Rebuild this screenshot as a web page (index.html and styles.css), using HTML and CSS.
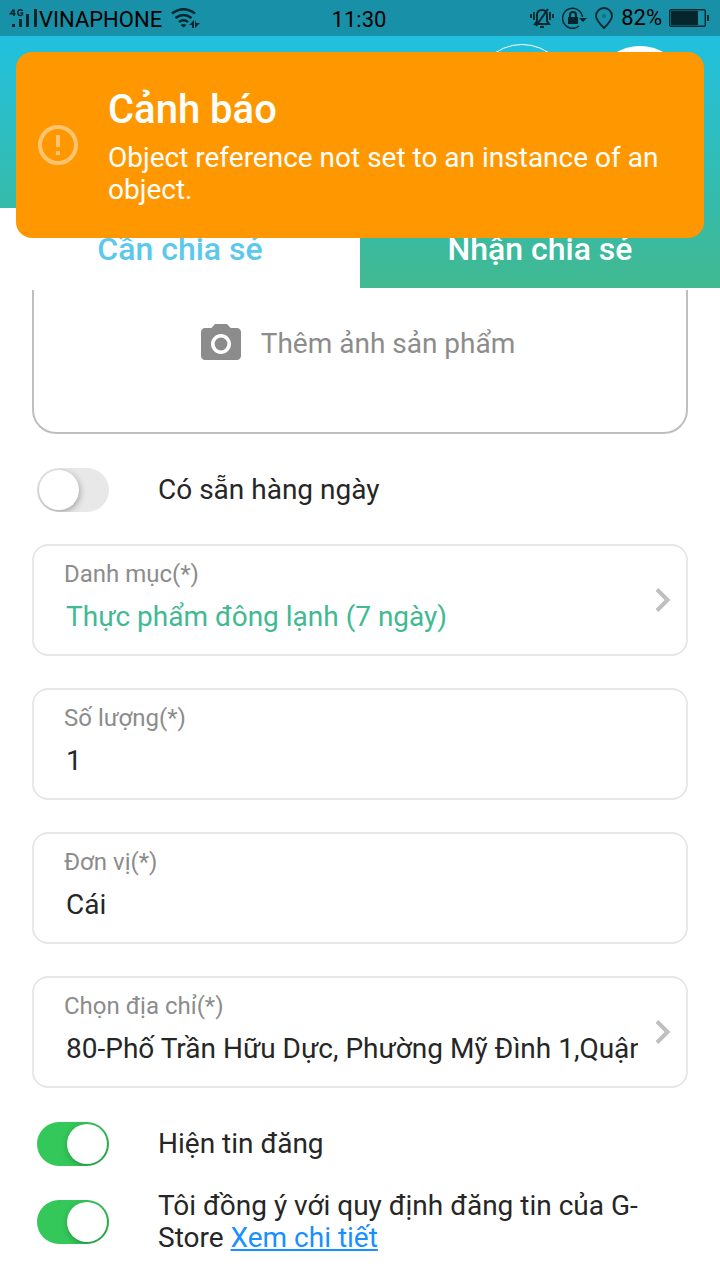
FILE: index.html
```html
<!DOCTYPE html>
<html lang="vi">
<head>
<meta charset="utf-8">
<meta name="viewport" content="width=device-width, initial-scale=1">
<title>G-Store</title>
<link rel="stylesheet" href="styles.css">
</head>
<body>
<header class="header">
  <div class="status">
    <div class="status-left">
      <svg class="signal" width="28" height="20" viewBox="0 0 28 20" fill="currentColor" aria-hidden="true">
        <path d="M3 16h3v3H3zM10 11h3v8h-3zM17 6h3v13h-3zM25 1h3v18h-3z"/>
        <path d="M4.500 1.500L1.500 5.800h5M5 1.500v6.500M13.500 3Q13 1.800 11.300 1.800Q8.800 1.800 8.800 4.700Q8.800 7.500 11.300 7.500Q13 7.500 13.500 6.500V5h-2" fill="none" stroke="currentColor" stroke-width="1.500"/>
      </svg>
      <span class="carrier">VINAPHONE</span>
      <svg class="wifi" width="28" height="20" viewBox="0 0 28 20" fill="none" stroke="currentColor" stroke-width="2.600" aria-hidden="true">
        <path d="M1 5.500Q12.500-3 24 5.500M4.500 10Q12.500 4 20.500 10M8 14Q12.500 10.500 17 14"/>
        <path d="M9.500 17Q12.500 14.800 15.500 17L12.500 19.500z" fill="currentColor" stroke="none"/>
        <path d="M23 12v8h-2v-3h-3zM24 20v-8l1 3h4z" fill="currentColor" stroke="none"/>
      </svg>
    </div>
    <span class="clock">11:30</span>
    <div class="status-right">
      <svg width="24" height="20" viewBox="0 0 24 20" fill="none" stroke="currentColor" stroke-width="2" aria-hidden="true">
        <path d="M1 6v4M4 4v8M20 4v8M23 6v4" stroke-width="1.800"/>
        <path d="M5 16h14l-2-3V7Q17 2 12 2Q7 2 7 7v6zM6 18L18 1M10 19h4"/>
      </svg>
      <svg width="25" height="22" viewBox="0 0 25 22" fill="none" stroke="currentColor" stroke-width="1.500" aria-hidden="true">
        <path d="M20.500 10A10 10 0 1 0 17 19"/>
        <path d="M6 10h10v7H6z" fill="currentColor" stroke="none"/>
        <path d="M8 10V8a3 3 0 0 1 6 0v2" stroke-width="2"/>
        <path d="M17 11h8l-4 4z" fill="currentColor" stroke="none"/>
      </svg>
      <svg width="18" height="22" viewBox="0 0 18 22" fill="none" stroke="currentColor" stroke-width="1.800" aria-hidden="true">
        <path d="M9 21Q1 13 1 9a8 8 0 0 1 16 0Q17 13 9 21z"/>
        <circle cx="9" cy="9" r="2" fill="#107085" stroke="none"/>
      </svg>
      <span class="percent">82%</span>
      <svg width="40" height="18" viewBox="0 0 40 18" fill="currentColor" aria-hidden="true">
        <rect x=".7" y=".7" width="35.600" height="16.600" rx="1.500" fill="none" stroke="currentColor" stroke-width="1.400"/>
        <path d="M2 2h27v14H2zM38 6h2v6h-2z"/>
      </svg>
    </div>
  </div>
  <div class="actions">
    <button class="action action-outline" type="button" aria-label="Menu"></button>
    <button class="action action-solid" type="button" aria-label="Avatar"></button>
  </div>
  <nav class="tabs">
    <button class="tab tab-active" type="button">Cần chia sẻ</button>
    <button class="tab" type="button">Nhận chia sẻ</button>
  </nav>
</header>

<section class="toast" role="alert">
  <svg class="toast-icon" width="40" height="40" viewBox="0 0 40 40" aria-hidden="true">
    <circle cx="20" cy="20" r="18" fill="none" stroke="#ffc470" stroke-width="4"/>
    <path d="M18 10h4v12h-4zM18 26h4v4h-4z" fill="#ffc470"/>
  </svg>
  <div class="toast-text">
    <h2 class="toast-title">Cảnh báo</h2>
    <p class="toast-message">Object reference not set to an instance of an object.</p>
  </div>
</section>

<main class="form">
  <button class="photo" type="button">
    <svg width="40" height="36" viewBox="2 2 20 18" fill="#8c8c8c" aria-hidden="true">
      <circle cx="12" cy="12" r="3.200"/>
      <path d="M9 2L7.170 4H4c-1.100 0-2 .9-2 2v12c0 1.100.9 2 2 2h16c1.100 0 2-.9 2-2V6c0-1.100-.9-2-2-2h-3.170L15 2H9zm3 15c-2.760 0-5-2.240-5-5s2.240-5 5-5 5 2.240 5 5-2.240 5-5 5z"/>
    </svg>
    <span class="photo-text">Thêm ảnh sản phẩm</span>
  </button>

  <div class="option option-daily">
    <input class="switch" type="checkbox" id="daily">
    <label for="daily">Có sẵn hàng ngày</label>
  </div>

  <div class="fields">
    <div class="field">
      <div class="field-body">
        <label class="field-label" for="category">Danh mục(*)</label>
        <input class="field-value field-green" id="category" type="text" readonly value="Thực phẩm đông lạnh (7 ngày)">
      </div>
      <svg class="chevron" width="16" height="26" viewBox="0 0 16 26" fill="none" stroke="#bfbfbf" stroke-width="4" aria-hidden="true"><path d="M2 2.500L12.500 13L2 23.500"/></svg>
    </div>
    <div class="field">
      <div class="field-body">
        <label class="field-label" for="quantity">Số lượng(*)</label>
        <input class="field-value" id="quantity" type="text" value="1">
      </div>
    </div>
    <div class="field">
      <div class="field-body">
        <label class="field-label" for="unit">Đơn vị(*)</label>
        <input class="field-value" id="unit" type="text" value="Cái">
      </div>
    </div>
    <div class="field">
      <div class="field-body">
        <label class="field-label" for="address">Chọn địa chỉ(*)</label>
        <input class="field-value" id="address" type="text" readonly value="80-Phố Trần Hữu Dực, Phường Mỹ Đình 1,Quận">
      </div>
      <svg class="chevron" width="16" height="26" viewBox="0 0 16 26" fill="none" stroke="#bfbfbf" stroke-width="4" aria-hidden="true"><path d="M2 2.500L12.500 13L2 23.500"/></svg>
    </div>
  </div>

  <div class="options">
    <div class="option">
      <input class="switch" type="checkbox" id="visible" checked>
      <label for="visible">Hiện tin đăng</label>
    </div>
    <div class="option">
      <input class="switch" type="checkbox" id="agree" checked>
      <label for="agree">Tôi đồng ý với quy định đăng tin của G-Store <a class="link" href="#">Xem chi tiết</a></label>
    </div>
  </div>
</main>
</body>
</html>
```
FILE: styles.css
```css
* {
  box-sizing: border-box;
}

body {
  margin: 0;
  background: #fff;
  color: #262626;
  font-family: Roboto, "Noto Sans", sans-serif;
  font-size: 28px;
  line-height: 32px;
}

button,
input {
  margin: 0;
  padding: 0;
  border: 0;
  background: none;
  color: inherit;
  font: inherit;
}

.header {
  background: linear-gradient(#21c0df, #21c0df 36px, #41b990);
}

/* Status bar */
.status {
  display: grid;
  grid-template-columns: 1fr auto 1fr;
  align-items: center;
  height: 36px;
  padding: 0 11px 0 9px;
  background: rgba(0, 0, 0, 0.25);
  color: #06262e;
  font-size: 22px;
}

.status-left,
.status-right {
  display: flex;
  align-items: center;
}

.status-left {
  gap: 2px;
}

.status-right {
  justify-content: flex-end;
  gap: 8px;
}

.carrier,
.clock,
.percent {
  color: #000;
}

.carrier,
.clock {
  padding-top: 3px;
}

.percent {
  margin-right: -1px;
}

.wifi {
  margin-left: 7px;
  overflow: visible;
}

/* Header actions */
.actions {
  display: flex;
  justify-content: flex-end;
  gap: 22px;
  height: 98px;
  margin: 8px 32px 66px;
}

.action {
  width: 96px;
  height: 96px;
  border-radius: 50%;
}

.action-outline {
  border: 1px solid #fff;
}

.action-solid {
  align-self: flex-end;
  background: #fff;
}

/* Tabs */
.tabs {
  display: flex;
}

.tab {
  flex: 1;
  height: 80px;
  padding-top: 2px;
  color: #fff;
  font-size: 32px;
  font-weight: 500;
}

.tab-active {
  background: #fff;
  color: #5bc8ec;
}

/* Warning toast floating over the header */
.toast {
  position: absolute;
  top: 52px;
  left: 16px;
  right: 16px;
  display: flex;
  align-items: center;
  gap: 30px;
  padding: 32px 22px;
  border-radius: 16px;
  background: #ff9800;
  color: #fff;
}

.toast-icon {
  flex: none;
}

.toast-text {
  padding-top: 2px;
}

.toast-title {
  margin: 0 0 8px;
  font-size: 40px;
  font-weight: 500;
  line-height: 48px;
}

.toast-message {
  margin: 0;
}

/* Form */
.form {
  padding: 2px 32px 25px;
}

.photo {
  display: flex;
  align-items: flex-start;
  justify-content: center;
  gap: 20px;
  width: 100%;
  padding: 34px 4px 72px 0;
  border: 2px solid #bfbfbf;
  border-top: 0;
  border-radius: 0 0 24px 24px;
  color: #8c8c8c;
}

.photo-text {
  padding-top: 4px;
}

.fields {
  display: grid;
  gap: 32px;
}

.field {
  display: flex;
  align-items: center;
  gap: 17px;
  padding: 14px 15px 21px 30px;
  border: 2px solid #e8e8e8;
  border-radius: 16px;
}

.field-body {
  display: flex;
  flex: 1;
  flex-direction: column;
  gap: 13px;
  min-width: 0;
}

.field-label {
  color: #8c8c8c;
  font-size: 24px;
  line-height: 28px;
}

.field-value {
  height: 32px;
  margin-left: 2px;
  outline: 0;
}

.field-green {
  color: #41b993;
}

.chevron {
  flex: none;
  margin-top: 7px;
}

/* Switch rows */
.options {
  display: grid;
  gap: 14px;
  padding-top: 24px;
}

.option {
  display: flex;
  align-items: center;
  gap: 49px;
  min-height: 64px;
  padding-left: 5px;
}

.option-daily {
  margin: 24px 0 22px;
}

.switch {
  flex: none;
  display: flex;
  align-items: center;
  width: 72px;
  height: 44px;
  padding: 2px;
  overflow: hidden;
  border-radius: 22px;
  background: #e8e8e8;
  appearance: none;
}

.switch::before {
  content: "";
  width: 40px;
  height: 40px;
  border-radius: 50%;
  background: #fff;
  box-shadow: 1px 2px 6px rgba(0, 0, 0, 0.3);
}

.switch:checked {
  justify-content: flex-end;
  background: #34c759;
}

.link {
  color: #1890ff;
  text-decoration-thickness: 2px;
  text-underline-offset: 2px;
}
```
